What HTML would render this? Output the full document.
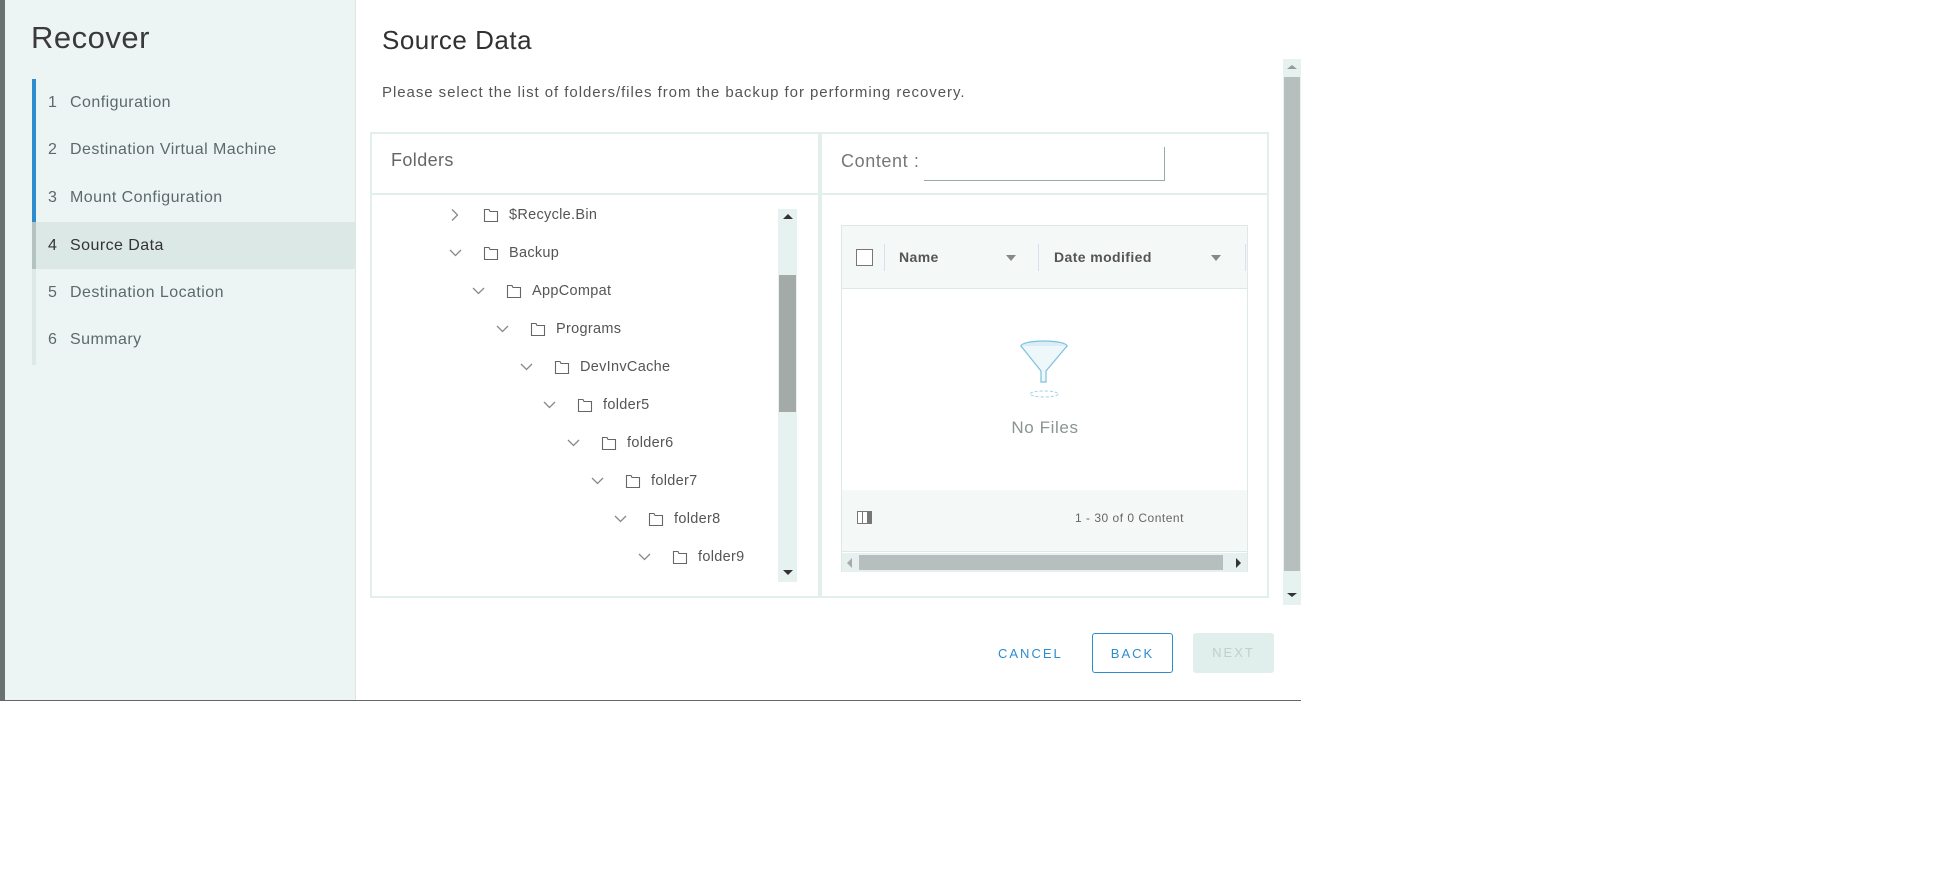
<!DOCTYPE html>
<html><head><meta charset="utf-8"><style>
*{margin:0;padding:0;box-sizing:border-box}
body{width:1958px;height:885px;background:#fff;font-family:"Liberation Sans",sans-serif;position:relative;overflow:hidden;color:#565656}
.a{position:absolute}
.step{position:absolute;left:32px;width:324px;height:47px;font-size:16px;color:#5a6a6a;padding-left:16px;line-height:47px;letter-spacing:0.45px}
.step b{font-weight:normal;display:inline-block;width:22px}
.row{position:absolute;height:38px;line-height:38px;font-size:14.5px;color:#555;letter-spacing:0.3px}
.row .ch{position:absolute;left:0;top:13px}
.row .fo{position:absolute;left:34px;top:12px}
.row span{position:absolute;left:60px;white-space:nowrap}
</style></head><body>
<div class="a" style="left:0;top:0;width:5px;height:700px;background:#6b7070"></div>
<div class="a" style="left:5px;top:0;width:351px;height:700px;background:#edf5f4;border-right:1px solid #dde8e6"></div>
<div class="a" style="left:31px;top:20px;font-size:31px;color:#3a3a3a;letter-spacing:0.5px">Recover</div>
<div class="a" style="left:32px;top:79px;width:4px;height:143px;background:#2d8ccd"></div>
<div class="a" style="left:32px;top:222px;width:4px;height:143px;background:#dde9e7"></div>
<div class="a" style="left:32px;top:222px;width:324px;height:47px;background:#dbe8e5"></div>
<div class="a" style="left:32px;top:222px;width:4px;height:47px;background:#b4c2c0"></div>
<div class="step" style="top:79px"><b>1</b>Configuration</div>
<div class="step" style="top:126px"><b>2</b>Destination Virtual Machine</div>
<div class="step" style="top:174px"><b>3</b>Mount Configuration</div>
<div class="step" style="top:222px;color:#333"><b>4</b>Source Data</div>
<div class="step" style="top:269px"><b>5</b>Destination Location</div>
<div class="step" style="top:316px"><b>6</b>Summary</div>

<div class="a" style="left:382px;top:25px;font-size:26px;color:#313131;letter-spacing:0.5px">Source Data</div>
<div class="a" style="left:382px;top:84px;font-size:15px;color:#555;letter-spacing:0.95px">Please select the list of folders/files from the backup for performing recovery.</div>

<div class="a" style="left:370px;top:132px;width:448px;height:466px;border:2px solid #e3efed;border-right:none"></div>
<div class="a" style="left:818px;top:132px;width:4px;height:466px;background:#e3efed"></div>
<div class="a" style="left:820px;top:132px;width:449px;height:466px;border:2px solid #e3efed;border-left:none"></div>
<div class="a" style="left:370px;top:193px;width:899px;height:2px;background:#e3efed"></div>
<div class="a" style="left:391px;top:150px;font-size:18px;color:#666;letter-spacing:0.4px">Folders</div>
<div class="a" style="left:841px;top:151px;font-size:18px;color:#777;letter-spacing:0.6px">Content :</div>
<div class="a" style="left:924px;top:147px;width:241px;height:34px;border-bottom:1px solid #9aa;border-right:1px solid #9aa"></div>

<div class="a" style="left:778px;top:209px;width:19px;height:373px;background:#e6f2f0"></div>
<div class="a" style="left:779px;top:275px;width:17px;height:137px;background:#a3aaa8"></div>
<div class="a" style="left:783px;top:214px;width:0;height:0;border:5px solid transparent;border-bottom:5px solid #333;border-top:none"></div>
<div class="a" style="left:783px;top:570px;width:0;height:0;border:5px solid transparent;border-top:5px solid #333;border-bottom:none"></div>

<svg width="0" height="0" style="position:absolute"><defs>
<g id="f"><path d="M1.5 3.5V13.5H14.5V3.5H7L6 1.5H1.5Z" fill="none" stroke="#666" stroke-width="1.1"/></g>
<g id="d"><path d="M1 3L6.5 8.5L12 3" fill="none" stroke="#888" stroke-width="1.3"/></g>
<g id="r"><path d="M3 0.5L8.5 6L3 11.5" fill="none" stroke="#888" stroke-width="1.3"/></g>
</defs></svg>

<div class="row" style="left:449px;top:196px"><svg class="ch" width="14" height="13"><use href="#r"/></svg><svg class="fo" width="16" height="15"><use href="#f"/></svg><span>$Recycle.Bin</span></div>
<div class="row" style="left:449px;top:234px"><svg class="ch" width="14" height="13"><use href="#d"/></svg><svg class="fo" width="16" height="15"><use href="#f"/></svg><span>Backup</span></div>
<div class="row" style="left:472px;top:272px"><svg class="ch" width="14" height="13"><use href="#d"/></svg><svg class="fo" width="16" height="15"><use href="#f"/></svg><span>AppCompat</span></div>
<div class="row" style="left:496px;top:310px"><svg class="ch" width="14" height="13"><use href="#d"/></svg><svg class="fo" width="16" height="15"><use href="#f"/></svg><span>Programs</span></div>
<div class="row" style="left:520px;top:348px"><svg class="ch" width="14" height="13"><use href="#d"/></svg><svg class="fo" width="16" height="15"><use href="#f"/></svg><span>DevInvCache</span></div>
<div class="row" style="left:543px;top:386px"><svg class="ch" width="14" height="13"><use href="#d"/></svg><svg class="fo" width="16" height="15"><use href="#f"/></svg><span>folder5</span></div>
<div class="row" style="left:567px;top:424px"><svg class="ch" width="14" height="13"><use href="#d"/></svg><svg class="fo" width="16" height="15"><use href="#f"/></svg><span>folder6</span></div>
<div class="row" style="left:591px;top:462px"><svg class="ch" width="14" height="13"><use href="#d"/></svg><svg class="fo" width="16" height="15"><use href="#f"/></svg><span>folder7</span></div>
<div class="row" style="left:614px;top:500px"><svg class="ch" width="14" height="13"><use href="#d"/></svg><svg class="fo" width="16" height="15"><use href="#f"/></svg><span>folder8</span></div>
<div class="row" style="left:638px;top:538px"><svg class="ch" width="14" height="13"><use href="#d"/></svg><svg class="fo" width="16" height="15"><use href="#f"/></svg><span>folder9</span></div>

<!-- grid -->
<div class="a" style="left:841px;top:225px;width:407px;height:347px;border:1px solid #dde9e7;background:#fff"></div>
<div class="a" style="left:842px;top:226px;width:405px;height:63px;background:#f4f8f7;border-bottom:1px solid #dde9e7"></div>
<div class="a" style="left:856px;top:249px;width:17px;height:17px;border:1px solid #777;background:#fff"></div>
<div class="a" style="left:884px;top:244px;width:1px;height:27px;background:#dde"></div>
<div class="a" style="left:899px;top:249px;font-size:14px;font-weight:bold;color:#555;letter-spacing:0.4px">Name</div>
<div class="a" style="left:1006px;top:255px;border:5px solid transparent;border-top:6px solid #888;border-bottom:none"></div>
<div class="a" style="left:1038px;top:244px;width:1px;height:27px;background:#dde"></div>
<div class="a" style="left:1054px;top:249px;font-size:14px;font-weight:bold;color:#555;letter-spacing:0.4px">Date modified</div>
<div class="a" style="left:1211px;top:255px;border:5px solid transparent;border-top:6px solid #888;border-bottom:none"></div>
<div class="a" style="left:1245px;top:244px;width:1px;height:27px;background:#dde"></div>
<svg class="a" style="left:1017px;top:338px" width="54" height="64" viewBox="0 0 54 64">
<ellipse cx="27" cy="8" rx="23" ry="5" fill="#d9eef6" stroke="#7cc0de" stroke-width="1.2"/>
<path d="M4 8L24 33V44H29V33L50 8" fill="#eef8fb" stroke="#7cc0de" stroke-width="1.2"/>
<ellipse cx="27" cy="56" rx="14" ry="3" fill="none" stroke="#9fd2e8" stroke-dasharray="3 2"/>
</svg>
<div class="a" style="left:985px;top:418px;width:120px;text-align:center;font-size:17px;color:#8a9494;letter-spacing:0.6px">No Files</div>
<div class="a" style="left:842px;top:490px;width:405px;height:62px;background:#f4f8f7;border-bottom:1px solid #dde9e7"></div>
<div class="a" style="left:857px;top:511px;width:15px;height:13px;border:1px solid #777;background:linear-gradient(90deg,#fff 0 4px,#777 4px 5px,#fff 5px 9px,#777 9px)"></div>
<div class="a" style="left:1075px;top:511px;font-size:12px;color:#666;letter-spacing:0.5px">1 - 30 of 0 Content</div>
<div class="a" style="left:842px;top:553px;width:405px;height:19px;background:#e6f0ef"></div>
<div class="a" style="left:859px;top:555px;width:364px;height:15px;background:#b6bfbd"></div>
<div class="a" style="left:847px;top:558px;border:5px solid transparent;border-right:5px solid #aaa;border-left:none"></div>
<div class="a" style="left:1236px;top:558px;border:5px solid transparent;border-left:5px solid #333;border-right:none"></div>

<!-- outer scroll -->
<div class="a" style="left:1283px;top:59px;width:18px;height:546px;background:#e6f2f0"></div>
<div class="a" style="left:1284px;top:77px;width:16px;height:494px;background:#b6bfbd"></div>
<div class="a" style="left:1287px;top:65px;border:5px solid transparent;border-bottom:4px solid #999;border-top:none"></div>
<div class="a" style="left:1287px;top:593px;border:5px solid transparent;border-top:4px solid #333;border-bottom:none"></div>

<div class="a" style="left:998px;top:646px;font-size:13px;letter-spacing:2px;color:#2d8ccd">CANCEL</div>
<div class="a" style="left:1092px;top:633px;width:81px;height:40px;border:1px solid #2d8ccd;border-radius:3px;text-align:center;line-height:40px;font-size:13px;letter-spacing:2px;color:#2d8ccd">BACK</div>
<div class="a" style="left:1193px;top:633px;width:81px;height:40px;background:#e0eeec;border-radius:3px;text-align:center;line-height:40px;font-size:13px;letter-spacing:2px;color:#bfcfcd">NEXT</div>
<div class="a" style="left:0;top:700px;width:1301px;height:1px;background:#666"></div>
</body></html>
